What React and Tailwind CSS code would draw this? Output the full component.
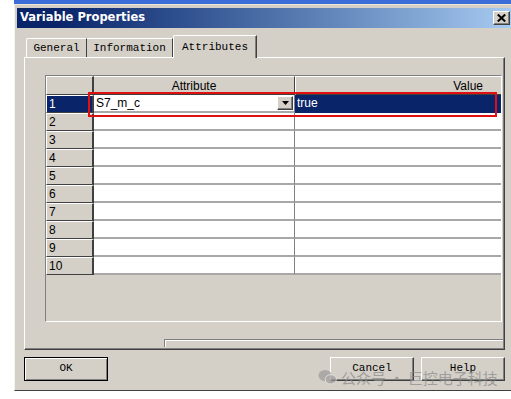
import React from "react";

const mono = { fontFamily: '"Liberation Mono", "DejaVu Sans Mono", monospace' };
const sans = { fontFamily: '"Liberation Sans", Arial, sans-serif' };

function RowHeader({ n, selected }) {
  return (
    <div
      className={
        "w-[48px] h-full flex items-center pl-[2px] text-[12px] leading-none border-t border-l border-t-white border-l-white border-r-2 border-b border-r-[#404040] border-b-[#404040] " +
        (selected ? "bg-[#0a246a] text-white" : "bg-[#d4d0c8] text-black")
      }
      style={sans}
    >
      {n}
    </div>
  );
}

function Row({ n }) {
  const first = n === 1;
  return (
    <div className="flex h-[18px] shrink-0">
      <RowHeader n={n} selected={first} />
      <div className="w-[201px] h-full bg-white border-r border-r-[#808080] border-b-2 border-b-[#a8a8a8] flex items-center justify-between">
        {first ? (
          <>
            <span className="pl-[2px] text-[12px] leading-none text-black" style={sans}>
              S7_m_c
            </span>
            <div className="w-[16px] h-[14px] mr-[1px] bg-[#d4d0c8] border-t border-l border-t-white border-l-white border-r border-b border-r-[#404040] border-b-[#404040] shadow-[inset_-1px_-1px_0_#808080] flex items-center justify-center">
              <svg width="7" height="4" viewBox="0 0 7 4">
                <polygon points="0,0 7,0 3.5,4" fill="#000" />
              </svg>
            </div>
          </>
        ) : null}
      </div>
      <div
        className={
          "flex-1 h-full border-b-2 flex items-center " +
          (first ? "bg-[#0a246a] border-b-[#0a246a]" : "bg-white border-b-[#a8a8a8]")
        }
      >
        {first ? (
          <span className="pl-[2px] text-[12px] leading-none text-white" style={sans}>
            true
          </span>
        ) : null}
      </div>
    </div>
  );
}

function Btn({ children, isDefault }) {
  return (
    <div
      className={
        "w-[84px] h-[24px] bg-[#d4d0c8] flex items-center justify-center pb-[2px] text-[11px] text-black " +
        (isDefault
          ? "border border-black shadow-[inset_1px_1px_0_white,inset_-1px_-1px_0_#808080]"
          : "border-t border-l border-t-white border-l-white border-r border-b border-r-[#404040] border-b-[#404040] shadow-[inset_-1px_-1px_0_#808080]")
      }
      style={mono}
    >
      {children}
    </div>
  );
}

export default function App() {
  const rows = [1, 2, 3, 4, 5, 6, 7, 8, 9, 10];
  return (
    <div className="relative w-[511px] h-[399px] bg-white overflow-hidden">
      <div className="ml-[14px] h-[4px] bg-[#3c6dd8]" />
      <div className="ml-[14px] w-[497px] h-[387px] bg-[#d4d0c8] border-l border-l-[#f4f3ee] border-t border-t-[#ece9d8] border-b border-b-[#404040] flex flex-col">
        {/* title bar */}
        <div className="mt-[3px] ml-[2px] h-[20px] flex items-center justify-between bg-linear-to-r from-[#0a246a] from-[8%] to-[#a6caf0] pl-[3px] pr-[1px]">
          <span className="text-white font-bold leading-none" style={{ fontFamily: '"DejaVu Sans", "Liberation Sans", sans-serif', fontSize: "11.5px" }}>
            Variable Properties
          </span>
          <div className="w-[17px] h-[14px] bg-[#d4d0c8] border-t border-l border-t-white border-l-white border-r border-b border-r-[#404040] border-b-[#404040] shadow-[inset_-1px_-1px_0_#808080] flex items-center justify-center">
            <svg width="9" height="8" viewBox="0 0 9 8">
              <path d="M0.8 0.5 L8.2 7.5 M8.2 0.5 L0.8 7.5" stroke="#000" strokeWidth="2" />
            </svg>
          </div>
        </div>

        {/* tabs */}
        <div className="mt-[7px] ml-[9px] h-[22px] flex items-end pl-[2px] relative z-10">
          <div className="w-[61px] h-[19px] border-t border-l border-t-white border-l-white border-r border-r-[#404040] rounded-tl-[2px] flex items-center justify-center text-[11px] text-black" style={mono}>
            General
          </div>
          <div className="w-[86px] h-[19px] border-t border-t-white border-r border-r-[#404040] flex items-center justify-center text-[11px] text-black" style={mono}>
            Information
          </div>
          <div className="w-[84px] h-[23px] -mb-px bg-[#d4d0c8] border-t border-l border-t-white border-l-white border-r border-r-[#404040] shadow-[inset_-1px_0_0_#808080] rounded-tl-[2px] flex items-start justify-center pt-[3px] text-[11px] text-black" style={mono}>
            Attributes
          </div>
        </div>

        {/* panel */}
        <div className="ml-[9px] w-[481px] h-[293px] border-t border-l border-t-white border-l-white border-r border-b border-r-[#404040] border-b-[#404040] shadow-[inset_-1px_-1px_0_#808080] flex flex-col">
          <div className="mt-[17px] ml-[20px] w-[457px] h-[247px] border-t border-l border-t-[#808080] border-l-[#808080] border-b border-r border-b-white border-r-white bg-[#d4d0c8] flex flex-col overflow-hidden">
            {/* header */}
            <div className="flex h-[19px] shrink-0">
              <div className="w-[48px] h-full border-t border-l border-t-white border-l-white border-r-2 border-b border-r-[#404040] border-b-[#404040]" />
              <div className="w-[201px] h-full border-t border-t-white border-r border-b border-r-[#404040] border-b-[#404040] flex items-center justify-center text-[12px] leading-none text-black" style={sans}>
                Attribute
              </div>
              <div className="flex-1 h-full border-t border-l border-t-white border-l-white border-b border-b-[#404040] flex items-center justify-end pr-[18px] text-[12px] leading-none text-black" style={sans}>
                Value
              </div>
            </div>
            {rows.map((n) => (
              <Row key={n} n={n} />
            ))}
          </div>
          <div className="mt-[17px] ml-[139px] w-[339px] h-[8px] border-t border-l border-t-[#808080] border-l-[#808080] shadow-[inset_1px_1px_0_white]" />
        </div>

        {/* buttons */}
        <div className="mt-[7px] ml-[9px] flex items-center">
          <Btn isDefault>OK</Btn>
          <div className="ml-[222px]">
            <Btn>Cancel</Btn>
          </div>
          <div className="ml-[7px]">
            <Btn>Help</Btn>
          </div>
        </div>
      </div>

      {/* red highlight */}
      <div className="absolute left-[88px] top-[92px] w-[409px] h-[25px] border-2 border-[#e01010]" />

      {/* watermark */}
      <div className="absolute left-[318px] top-[369px] flex items-center gap-[4px] opacity-70">
        <svg width="19" height="16" viewBox="0 0 20 17">
          <ellipse cx="7.5" cy="7" rx="7" ry="6" fill="#9a9a9a" />
          <ellipse cx="13.5" cy="11" rx="6" ry="5" fill="#9a9a9a" stroke="#e8e8e8" strokeWidth="1" />
        </svg>
        <span className="text-[15px] leading-none text-[#8a8a8a]" style={{ fontFamily: '"Noto Sans CJK SC", "Noto Sans", sans-serif' }}>
          公众号 · 巨控电子科技
        </span>
      </div>
    </div>
  );
}
